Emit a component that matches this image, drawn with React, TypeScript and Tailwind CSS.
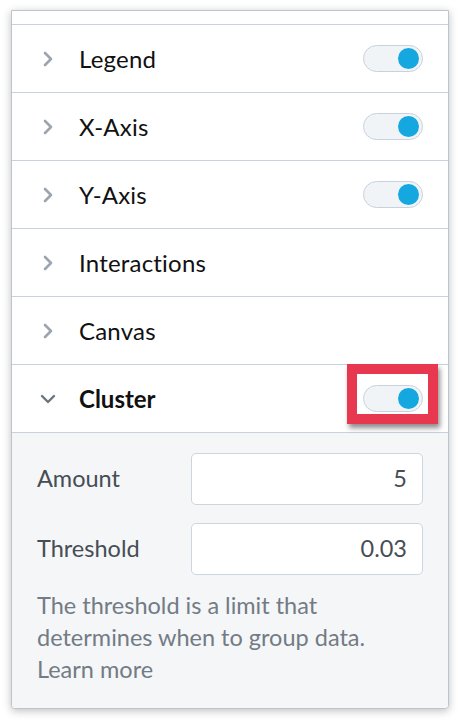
import React from "react";

const font = { fontFamily: "Lato, 'Noto Sans', sans-serif" };

function Chevron({ down }: { down?: boolean }) {
  return down ? (
    <svg width="18" height="12" viewBox="0 0 18 12" className="shrink-0">
      <path d="M3 3 L9 9 L15 3" fill="none" stroke="#6b737c" strokeWidth="2.4" strokeLinecap="round" strokeLinejoin="round" />
    </svg>
  ) : (
    <svg width="12" height="18" viewBox="0 0 12 18" className="shrink-0">
      <path d="M3 3 L9 9 L3 15" fill="none" stroke="#9ca4ad" strokeWidth="2.6" strokeLinecap="round" strokeLinejoin="round" />
    </svg>
  );
}

function Toggle() {
  return (
    <div className="w-[60px] h-[27px] rounded-full border border-[#c9d2dc] bg-[#f1f4f7] flex items-center justify-end pr-[3px]">
      <div className="w-[21px] h-[21px] rounded-full bg-[#15a8e0]" />
    </div>
  );
}

function Row({ label, toggle }: { label: string; toggle?: boolean }) {
  return (
    <div className="h-[68px] border-b border-[#c9d2dc] flex items-center pl-[30px] pr-[25px] shrink-0">
      <div className="w-[37px] flex">
        <Chevron />
      </div>
      <div className="flex-1 text-[24px] text-[#111] tracking-[0.2px]">{label}</div>
      {toggle && <Toggle />}
    </div>
  );
}

export default function App() {
  return (
    <div className="w-[460px] h-[720px] bg-white pt-[10px] px-[11px]" style={font}>
      <div className="w-[438px] h-[699px] border border-[#bcc5cf] rounded-b-[4px] shadow-[0_2px_8px_rgba(0,0,0,0.25)] flex flex-col overflow-hidden bg-white">
        <div className="h-[14px] border-b border-[#c9d2dc] shrink-0" />
        <Row label="Legend" toggle />
        <Row label="X-Axis" toggle />
        <Row label="Y-Axis" toggle />
        <Row label="Interactions" />
        <Row label="Canvas" />
        <div className="h-[68px] border-b border-[#c9d2dc] flex items-center pl-[27px] pr-[25px] shrink-0">
          <div className="w-[40px] flex">
            <Chevron down />
          </div>
          <div className="flex-1 text-[24px] font-bold text-[#111]">Cluster</div>
          <div className="relative">
            <Toggle />
            <div className="absolute -left-[16px] -top-[21px] w-[91px] h-[60px] border-[10px] border-[#e8384f] shadow-[2px_4px_5px_rgba(0,0,0,0.45)]" />
          </div>
        </div>
        <div className="flex-1 bg-[#f4f6f8] pl-[25px] pr-[25px] pt-[20px]">
          <div className="flex items-center">
            <div className="w-[154px] text-[23.5px] text-[#464d55]">Amount</div>
            <div className="flex-1 h-[52px] rounded-[5px] border border-[#cdd5de] bg-white flex items-center justify-end pr-[15px] text-[23.5px] text-[#464d55]">5</div>
          </div>
          <div className="flex items-center mt-[18px]">
            <div className="w-[154px] text-[23.5px] text-[#464d55]">Threshold</div>
            <div className="flex-1 h-[52px] rounded-[5px] border border-[#cdd5de] bg-white flex items-center justify-end pr-[15px] text-[23.5px] text-[#464d55]">0.03</div>
          </div>
          <p className="mt-[14px] text-[23.5px] leading-[32px] text-[#737b84] pr-[10px]">
            The threshold is a limit that determines when to group data. Learn more
          </p>
        </div>
      </div>
    </div>
  );
}
